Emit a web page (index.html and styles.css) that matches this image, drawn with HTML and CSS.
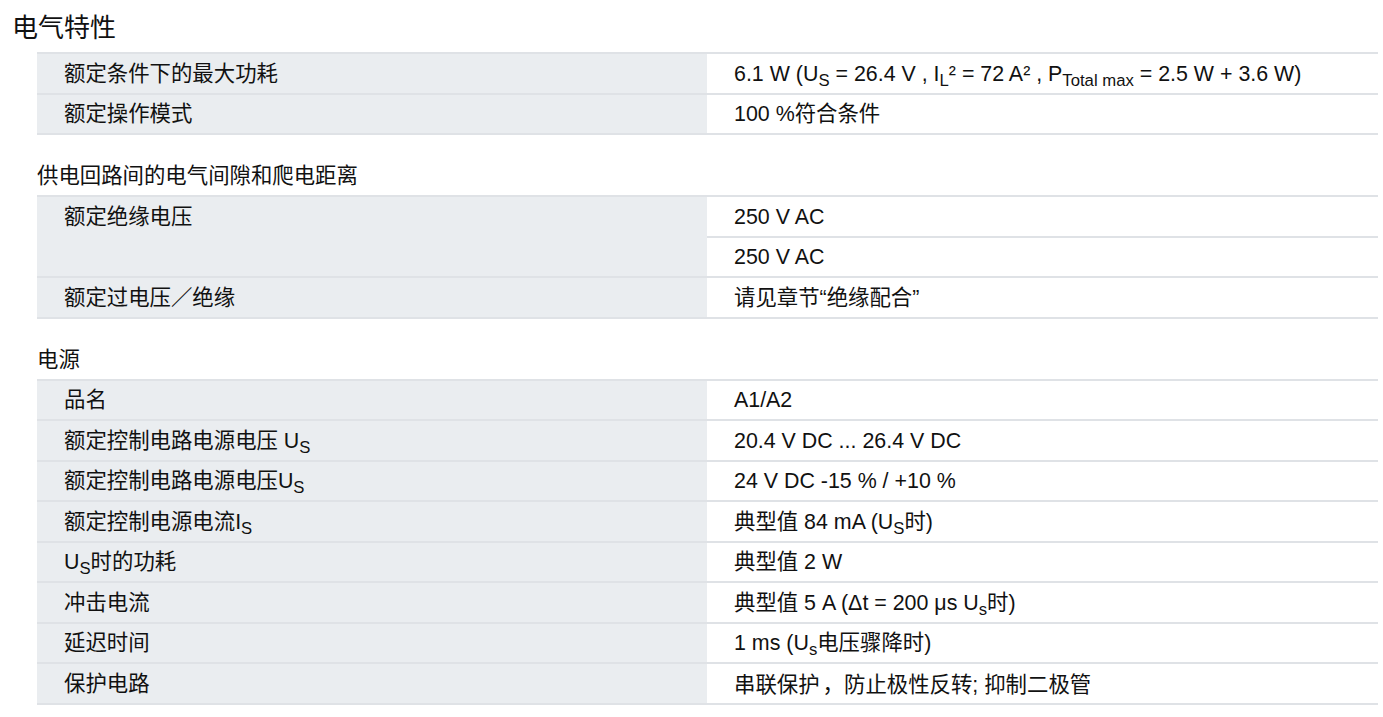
FILE: index.html
```html
<!DOCTYPE html>
<html lang="zh-CN">
<head>
<meta charset="utf-8">
<title>电气特性</title>
<link rel="stylesheet" href="styles.css">
</head>
<body>
<h1 class="title">电气特性</h1>

<div class="tbl first">
  <div class="k"><span>额定条件下的最大功耗</span></div>
  <div class="v"><span>6.1 W (U<sub>S</sub> = 26.4 V , I<sub>L</sub>² = 72 A² , P<sub>Total max</sub> = 2.5 W + 3.6 W)</span></div>
  <div class="k"><span>额定操作模式</span></div>
  <div class="v"><span>100 %符合条件</span></div>
</div>

<h2 class="sec">供电回路间的电气间隙和爬电距离</h2>
<div class="tbl">
  <div class="k span2"><div class="inner">额定绝缘电压</div></div>
  <div class="v"><span>250 V AC</span></div>
  <div class="v"><span>250 V AC</span></div>
  <div class="k"><span>额定过电压／绝缘</span></div>
  <div class="v"><span>请见章节“绝缘配合”</span></div>
</div>

<h2 class="sec">电源</h2>
<div class="tbl">
  <div class="k"><span>品名</span></div>
  <div class="v"><span>A1/A2</span></div>
  <div class="k"><span>额定控制电路电源电压 U<sub>S</sub></span></div>
  <div class="v"><span>20.4 V DC ... 26.4 V DC</span></div>
  <div class="k"><span>额定控制电路电源电压U<sub>S</sub></span></div>
  <div class="v"><span>24 V DC -15 % / +10 %</span></div>
  <div class="k"><span>额定控制电源电流I<sub>S</sub></span></div>
  <div class="v"><span>典型值 84 mA (U<sub>S</sub>时)</span></div>
  <div class="k"><span>U<sub>S</sub>时的功耗</span></div>
  <div class="v"><span>典型值 2 W</span></div>
  <div class="k"><span>冲击电流</span></div>
  <div class="v"><span>典型值 5 A (Δt = 200 μs U<sub>s</sub>时)</span></div>
  <div class="k"><span>延迟时间</span></div>
  <div class="v"><span>1 ms (U<sub>s</sub>电压骤降时)</span></div>
  <div class="k"><span>保护电路</span></div>
  <div class="v"><span>串联保护<span class="punct">，</span>防止极性反转; 抑制二极管</span></div>
</div>
</body>
</html>
```

FILE: styles.css
```css
html, body {
  margin: 0;
  padding: 0;
  background: #ffffff;
}

body {
  font-family: "Liberation Sans", "Noto Sans CJK SC", sans-serif;
  color: #111111;
  font-size: 21.4px;
}

.title {
  margin: 0;
  height: 52px;
  padding: 0 0 2px 12px;
  box-sizing: border-box;
  display: flex;
  align-items: center;
  font-size: 26px;
  font-weight: normal;
  color: #111111;
}

.sec {
  margin: 0 0 0 37px;
  height: 60px;
  padding-bottom: 4px;
  box-sizing: border-box;
  display: flex;
  align-items: flex-end;
  font-size: 21.4px;
  font-weight: normal;
  line-height: 30px;
}

.tbl {
  display: grid;
  grid-template-columns: 670px 1fr;
  width: 1341px;
  margin-left: 37px;
  border-top: 2px solid #dfe2e6;
}

.k,
.v {
  box-sizing: border-box;
  height: 40.5px;
  border-bottom: 2px solid #dfe2e6;
  display: flex;
  align-items: center;
  padding-left: 27px;
  padding-top: 1px;
  white-space: nowrap;
  line-height: 24px;
}

.k {
  background: #eaedf0;
}

.v {
  background: #ffffff;
}

.k.span2 {
  grid-row: span 2;
  height: 81px;
  align-items: flex-start;
  padding-top: 0;
}

.k.span2 .inner {
  height: 39.5px;
  padding-top: 1px;
  box-sizing: border-box;
  display: flex;
  align-items: center;
}

.punct {
  font-family: "Noto Sans CJK TC", sans-serif;
  padding-left: 3px;
}

sub {
  font-size: 0.78em;
  vertical-align: -0.32em;
  line-height: 0;
}
```
